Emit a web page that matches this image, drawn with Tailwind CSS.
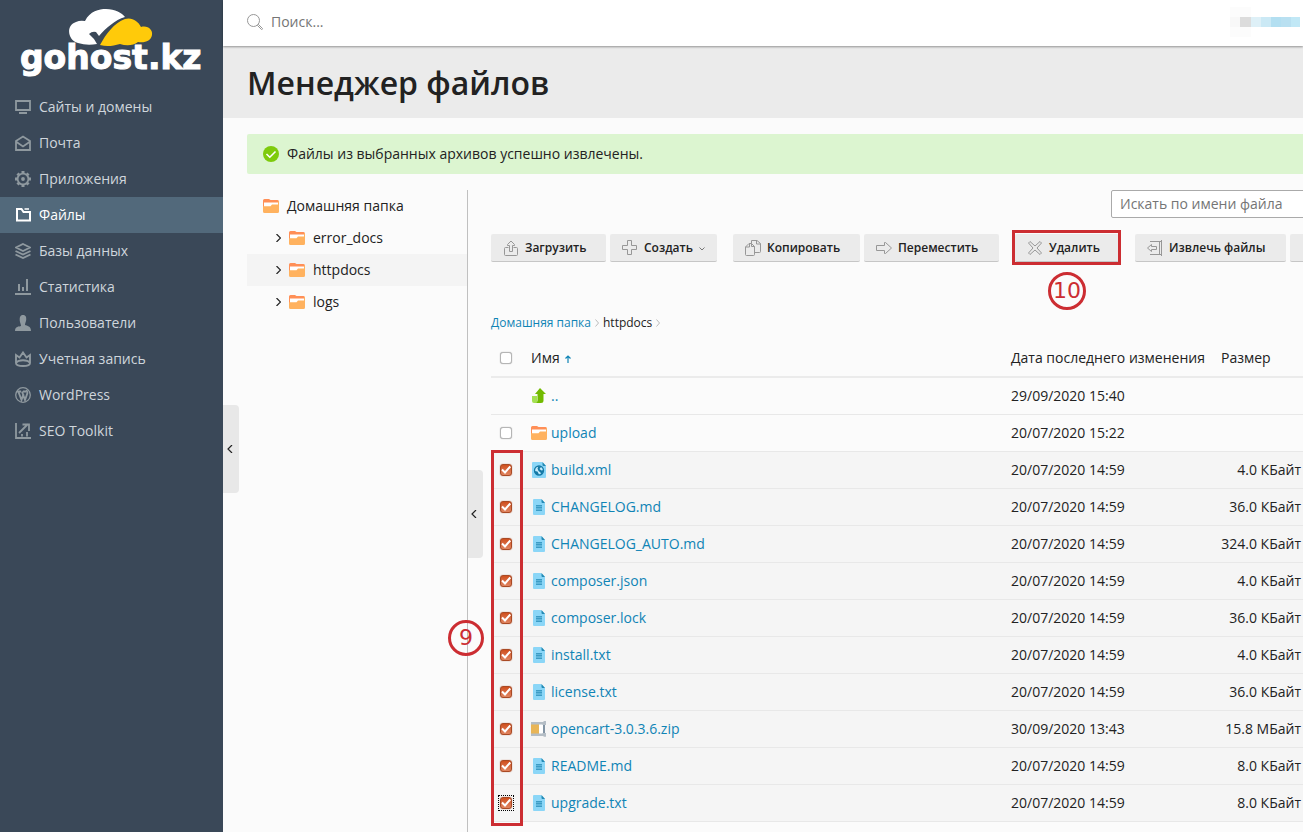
<!DOCTYPE html>
<html lang="ru">
<head>
<meta charset="utf-8">
<title>Менеджер файлов</title>
<script src="https://cdn.jsdelivr.net/npm/@tailwindcss/browser@4"></script>
</head>
<body class="h-screen overflow-hidden bg-[#fbfbfb] font-['Open_Sans','Noto_Sans',sans-serif] text-sm text-[#222]">
<svg class="hidden" aria-hidden="true">
  <symbol id="folder" viewBox="0 0 16 16"><path d="M0 2.500Q0 1 1.500 1H6l1.500 1h7Q16 2 16 3.500V9H0z" fill="#ff8f57"/><path d="M1 4.500h14V9H1z" fill="#fff"/><path d="M0 8.300h7.500L9 6.500h6V3h1v10.500q0 1.500-1.500 1.500h-13Q0 15 0 13.500z" fill="#ffb25f"/></symbol>
  <symbol id="doc" viewBox="0 0 16 16"><path d="M3 0h7l4 4v11q0 1-1 1H3q-1 0-1-1V1q0-1 1-1z" fill="#8bd6f7"/><path d="M10.500 0 14 4h-2.500q-1 0-1-1z" fill="#2389b3"/><path d="M5 6h6v6H5z" fill="#5fb5da"/><path d="M5 6.500h6M5 8.500h6M5 11.500h6" stroke="#3c9cc5"/></symbol>
  <symbol id="xml" viewBox="0 0 16 16"><path d="M2 0h9l4 4v11q0 1-1 1H2q-1 0-1-1V1q0-1 1-1z" fill="#8bd6f7"/><path d="M11.500 0 15 4h-2.500q-1 0-1-1z" fill="#2389b3"/><circle cx="8" cy="8.500" r="4.500" fill="#c5ecfc" stroke="#1479a6" stroke-width="1.300"/><path d="M3.500 9l3 .500 1.500 3-1 .500q-3.500-1-3.500-4zM7.500 4l2.500 1-1.500 2 2 1.500 2-.500q0 3-2.500 4.500l-.500-2-2-1.500-1-2.500z" fill="#1479a6"/></symbol>
  <symbol id="zip" viewBox="0 0 16 16"><path d="M0 3h8v10H0z" fill="#e8b557"/><path d="M8 3h4v10H8z" fill="#fff"/><path d="M12 3h2v10h-2z" fill="#8294a4"/><path d="M0 1h12l1-1h2v4h-3l-1-.500H0zM0 15h12l1 .800h2V12h-3l-1 .500H0z" fill="#b4bdc5"/></symbol>
  <symbol id="up" viewBox="0 0 16 16"><path d="M1 8h5v4l2 3H3q-2 0-2-2z" fill="#a4e052"/><path d="M9 0 15 6h-2.500v6.500q0 2.500-2.500 2.500H4.500Q7 14.500 6.500 12V6H4z" fill="#72ba00"/></symbol>
</svg>

<div class="flex h-full">
  <aside class="relative w-[223px] shrink-0 bg-[#3a4858]">
    <a href="#" class="relative block h-[89px]" aria-label="gohost.kz">
      <svg class="absolute left-[68px] top-2 h-10 w-[86px]" viewBox="68 8 86 40">
        <path d="M78 43C67 40 66 25 76 22Q80 20 85 21C90 11 99 9 106 9c9 0 16 4 19 8C115 20 106 28 99 36L96 32Q92 31 89 34 94 38 97 44 87 46 78 43Z" fill="#fff"/>
        <path d="M100 45C106 34 114 23 125 19c7-2 13 2 16 8 7-2 12 3 11 8-1 6-7 8-14 7-5 4-12 4-18 2-7 2-13 3-20 1Z" fill="#ffca0a"/>
      </svg>
      <span class="absolute left-5 top-[38px] font-['DejaVu_Sans'] text-[33px] leading-10 font-bold text-white [-webkit-text-stroke:1px_white]">gohost.kz</span>
    </a>
    <nav id="nav" class="text-[#cfd6dc]"></nav>
  </aside>

  <div class="relative flex min-w-0 flex-1 flex-col">
    <button aria-label="Свернуть меню" class="absolute left-0 top-[405px] flex h-[88px] w-4 items-center justify-center rounded-r bg-[#e8e8e8]"><svg class="mr-0.5 size-2" viewBox="0 0 8 8" fill="none" stroke="#222" stroke-width="1.200"><path d="M6 0 2 4l4 4"/></svg></button>

    <header class="relative z-10 flex h-[46px] shrink-0 items-center bg-white pb-0.5 pl-6 shadow-[0_1px_2px_#00000060]">
      <label class="flex items-center gap-2"><svg class="size-4" viewBox="0 0 16 16" fill="none" stroke="#979797"><circle cx="6.500" cy="6.500" r="6"/><path d="m10.500 11.500 1-1 4 4q0 1-1 1z"/></svg>
      <input aria-label="Поиск" placeholder="Поиск..." class="w-60 outline-none placeholder:text-[#757575]"></label>
      <div class="absolute right-[3px] top-[7px] flex h-[30px] items-center" aria-hidden="true">
        <i class="flex h-full w-[21px] items-center bg-[#fcfcfc]"><i class="size-2.5 bg-[#f8f8f8]"></i><i class="h-2.5 w-[11px] bg-[#dcdcdc]"></i></i><i class="size-2.5 bg-[#def0f7]"></i><i class="size-2.5 bg-[#cbe9f5]"></i><i class="size-2.5 bg-[#b3dff1]"></i><i class="size-2.5 bg-[#b9e0f1]"></i><i class="h-2.5 w-[9px] bg-[#c1e8f6]"></i>
      </div>
    </header>
    <div class="flex h-[72px] shrink-0 items-center bg-[#ebebeb] pt-0.5 pl-6"><h1 class="text-[32px] leading-10 font-semibold">Менеджер файлов</h1></div>

    <div class="ml-6 mt-4 flex h-10 shrink-0 items-center gap-2 rounded-l-xs bg-[#dcf5d0] pl-4"><svg class="size-4" viewBox="0 0 16 16"><circle cx="8" cy="8" r="8" fill="#7ecb0c"/><path d="m3.500 8 3.300 3.200L12.500 5.500" fill="none" stroke="#fff" stroke-width="1.600"/></svg><p>Файлы из выбранных архивов успешно извлечены.</p></div>

    <div class="ml-6 mt-4 flex min-h-0 flex-1">
      <div class="w-[221px] shrink-0 border-r border-[#c0c0c0]">
        <a href="#" class="flex h-8 items-center gap-2 pl-4"><svg class="size-4"><use href="#folder"/></svg>Домашняя папка</a>
        <div id="tree"></div>
      </div>
      <main class="relative min-w-0 flex-1 pl-[23px]">
        <button aria-label="Свернуть дерево" class="absolute left-0 top-[280px] flex h-[88px] w-[15px] items-center justify-center rounded-r bg-[#e8e8e8]"><svg class="mr-1 size-2" viewBox="0 0 8 8" fill="none" stroke="#222" stroke-width="1.200"><path d="M6 0 2 4l4 4"/></svg></button>
        <div class="flex justify-end"><input aria-label="Искать по имени файла" placeholder="Искать по имени файла" class="-mr-2 h-7 w-[200px] rounded-xs border border-[#aaa] bg-white px-2 pb-0.5 placeholder:text-[#757575]"></div>
        <div class="mt-4 flex h-7 gap-4 text-xs font-semibold">
          <div class="flex gap-1">
            <button class="flex w-[115px] shrink-0 items-center gap-1.5 rounded-xs border-b border-[#c6c6c6] bg-[#ebebeb] pl-3"><svg class="size-4" viewBox="0 0 16 16" fill="none" stroke="#979797"><path d="M5.500 7.500h-3q-1 0-1 1v6q0 1 1 1h11q1 0 1-1v-6q0-1-1-1h-3M6.500 11.500V5.500h-2v-1L8 1l3.500 3.500v1h-2v6z"/></svg>Загрузить</button>
            <button class="flex w-[107px] shrink-0 items-center gap-1.5 rounded-xs border-b border-[#c6c6c6] bg-[#ebebeb] pl-3"><svg class="size-4" viewBox="0 0 16 16" fill="none" stroke="#979797"><path d="M5.500.500h4v5h5v4h-5v5h-4v-5h-5v-4h5z"/></svg>Создать<svg class="mt-0.5 h-1 w-1.5" viewBox="0 0 6 4" fill="none" stroke="#777"><path d="m.500.500 2.500 2.500L5.500.500"/></svg></button>
          </div>
          <div class="flex gap-1">
            <button class="flex w-[127px] shrink-0 items-center gap-1.5 rounded-xs border-b border-[#c6c6c6] bg-[#ebebeb] pl-3"><svg class="size-4" viewBox="0 0 16 16" fill="none" stroke="#979797"><path d="M6.500 3.500H4L.500 7v7.500q0 1 1 1h7q1 0 1-1v-8l-3-3zM4.500 3.500V7h-4M6.500 3.500v-3h5.500l3.500 3v8q0 1-1 1h-5M11.500.500V4h4M6.500 3.500v3h3"/></svg>Копировать</button>
            <button class="flex w-[135px] shrink-0 items-center gap-1.5 rounded-xs border-b border-[#c6c6c6] bg-[#ebebeb] pl-3"><svg class="size-4" viewBox="0 0 16 16" fill="none" stroke="#979797"><path d="M.500 5.500h8V2.500h1L15.500 8l-6 5.500h-1v-3h-8z"/></svg>Переместить</button>
          </div>
          <button class="relative flex w-[104px] shrink-0 items-center gap-1.5 rounded-xs border-b border-[#c6c6c6] bg-[#ebebeb] pl-3"><svg class="size-4" viewBox="0 0 16 16" fill="none" stroke="#979797"><path d="M3 1.500 8 6l5-4.500L14.500 3 10 8l4.500 5-1.500 1.500L8 10l-5 4.500L1.500 13 6 8 1.500 3z" stroke-linejoin="round"/></svg>Удалить
            <span class="absolute -left-[3px] -top-1 h-[35px] w-[109px] border-3 border-[#cc2d32]"></span>
            <span class="absolute left-[33px] top-[38px] flex size-[38px] items-center justify-center rounded-full border-3 border-[#cc2d32] font-['DejaVu_Sans'] text-[22px] font-normal text-[#cc2d32]">10</span></button>
          <div class="flex gap-1">
            <button class="flex w-[151px] shrink-0 items-center gap-1.5 rounded-xs border-b border-[#c6c6c6] bg-[#ebebeb] pl-3"><svg class="size-4" viewBox="0 0 16 16" fill="none" stroke="#979797"><path d="M3 1.500h12M3 14.500h12M12.500 1v14M14.500 0v16M4.500 4.500.500 8l4 3.500V9.500h5v-3h-5z"/></svg>Извлечь файлы</button>
            <button aria-label="Ещё" class="w-10 shrink-0 rounded-xs border-b border-[#c6c6c6] bg-[#ebebeb]"></button>
          </div>
        </div>
        <nav class="mt-[51px] flex h-5 items-center gap-1 text-xs" aria-label="Путь"><a href="#" class="text-[#1084b5]">Домашняя папка</a><svg class="h-2 w-1" viewBox="0 0 4 8" fill="none" stroke="#bbb"><path d="m.500.500 3 3.500-3 3.500"/></svg><span>httpdocs</span><svg class="h-2 w-1" viewBox="0 0 4 8" fill="none" stroke="#bbb"><path d="m.500.500 3 3.500-3 3.500"/></svg></nav>
        <div class="relative mt-[7px]">
          <table class="w-full table-fixed border-collapse">
            <colgroup><col class="w-8"><col><col class="w-[210px]"><col class="w-[90px]"></colgroup>
            <thead><tr class="h-[37px] border-b-2 border-[#ebebeb]">
              <th class="pl-[9px]"><input type="checkbox" aria-label="Выбрать все" class="block size-3 appearance-none rounded-[3px] border border-[#b5b5b5] bg-white shadow-[0_0_1px_#999]"></th>
              <th class="pl-2 text-left font-normal">Имя <svg class="ml-0.5 inline h-2 w-1.5" viewBox="0 0 6 8" fill="none" stroke="#1084b5" stroke-width="1.200"><path d="M3 8V1M.500 3.500 3 1l2.500 2.500"/></svg></th>
              <th class="pl-2 text-left font-normal whitespace-nowrap">Дата последнего изменения</th><th class="pl-2 text-left font-normal">Размер</th></tr></thead>
            <tbody id="rows"></tbody>
          </table>
          <span class="absolute left-0 top-[110px] h-[376px] w-8 border-3 border-[#cc2d32]"></span>
          <span class="absolute -left-[43px] top-[280px] flex size-9 items-center justify-center rounded-full border-3 border-[#cc2d32] font-['DejaVu_Sans'] text-[22px] text-[#cc2d32]">9</span>
        </div>
      </main>
    </div>
  </div>
</div>
<script>
const navItems = [
  ['Сайты и домены', '<path d="M1 2h14v9H1z" stroke-width="1.800"/><path d="M4 14h8" stroke-width="2"/>'],
  ['Почта', '<path d="M1 6 8 1.500 15 6v9H1zM1.500 7 8 11.500 14.500 7" stroke-width="1.800"/>'],
  ['Приложения', '<circle cx="8" cy="8" r="5.400" stroke-width="1.800"/><path d="M8 0v2.500M8 13.500V16M0 8h2.500M13.500 8H16M2.500 2.500 4 4M12 12l1.500 1.500M13.500 2.500 12 4M4 12l-1.500 1.500" stroke-width="3"/><circle cx="8" cy="8" r="1.900" fill="currentColor" stroke="none"/>'],
  ['Файлы', '<path d="M2 2h4.500l2 3H15v8.500H2z" stroke-width="2"/><path d="M9.500 2H14" stroke-width="1.500"/>'],
  ['Базы данных', '<path d="M8 1 15 4.500 8 8 1 4.500zM.500 8 8 11.500 15.500 8M.500 11.500 8 15l7.500-3.500" stroke-width="1.900"/>'],
  ['Статистика', '<path d="M0 15h16" stroke-width="2"/><path d="M4 12V5M8 12V8M12 12V0" stroke-width="2"/>'],
  ['Пользователи', '<path d="M8 0c3 0 3.500 2.500 3.200 5-.2 2-1.200 3-1.200 5 2 .800 6 1 6 6H0c0-5 4-4.200 6-5 0-2-1-3-1.200-5C4.500 2.500 5 0 8 0z" fill="currentColor" stroke="none"/>'],
  ['Учетная запись', '<path d="M1 12V4l3.500 2.500L8 1.500l3.500 5L15 4v8c0 4-14 4-14 0zM1.500 11.500c2-3 11-3 13 0" stroke-width="1.900"/>'],
  ['WordPress', '<circle cx="8" cy="8" r="7.300" stroke-width="1.300"/><path d="M2 4.500h4M8 4.500h3M3.500 5 6.500 13 8.500 7M7 4.500 10 13l2.300-6.500c.500-1.500-.800-2-.500-3.500" stroke-width="1.900"/>'],
  ['SEO Toolkit', '<path d="M1 0v15h15" stroke-width="1.800"/><path d="m4 10 9-9M7.500 1.500H14V8M7 13.500V11M12 13.500V9" stroke-width="1.800"/>']
];
document.getElementById('nav').innerHTML = navItems.map(([t, p], i) =>
  `<a href="#" class="flex h-9 items-center gap-2 pl-[15px] ${i === 3 ? 'bg-[#52697b] text-white' : ''}"><svg class="size-4 ${i === 3 ? 'text-white' : 'text-[#8f999f]'}" viewBox="0 0 16 16" fill="none" stroke="currentColor">${p}</svg>${t}</a>`).join('');

document.getElementById('tree').innerHTML = ['error_docs', 'httpdocs', 'logs'].map(t =>
  `<a href="#" class="flex h-8 items-center gap-2 pl-7 ${t === 'httpdocs' ? 'bg-[#f4f4f4]' : ''}"><svg class="h-2 w-1.5" viewBox="0 0 6 8" fill="none" stroke="#222" stroke-width="1.200"><path d="m1.500 0 4 4-4 4"/></svg><svg class="size-4"><use href="#folder"/></svg>${t}</a>`).join('');

const d = '20/07/2020 14:59';
const files = [
  ['..', 'up', '29/09/2020 15:40', ''], ['upload', 'folder', '20/07/2020 15:22', ''],
  ['build.xml', 'xml', d, '4.0 КБайт'], ['CHANGELOG.md', 'doc', d, '36.0 КБайт'],
  ['CHANGELOG_AUTO.md', 'doc', d, '324.0 КБайт'], ['composer.json', 'doc', d, '4.0 КБайт'],
  ['composer.lock', 'doc', d, '36.0 КБайт'], ['install.txt', 'doc', d, '4.0 КБайт'],
  ['license.txt', 'doc', d, '36.0 КБайт'], ['opencart-3.0.3.6.zip', 'zip', '30/09/2020 13:43', '15.8 МБайт'],
  ['README.md', 'doc', d, '8.0 КБайт'], ['upgrade.txt', 'doc', d, '8.0 КБайт']
];
document.getElementById('rows').innerHTML = files.map(([n, icon, date, size], i) => {
  const box = i === 0 ? '' : i === 1
    ? `<input type="checkbox" aria-label="${n}" class="block size-3 appearance-none rounded-[3px] border border-[#b5b5b5] bg-white shadow-[0_0_1px_#999]">`
    : `<label class="relative block size-3 ${i === 11 ? 'outline-1 outline-offset-1 outline-dotted outline-black' : ''}"><input type="checkbox" checked aria-label="${n}" class="block size-3 appearance-none rounded-[3px] border border-[#a94a25] bg-linear-to-b from-[#cf4f1c] to-[#e08560] shadow-[0_0_1px_#a94a25]"><svg class="pointer-events-none absolute inset-0 size-3" viewBox="0 0 12 12" fill="none" stroke="#fff" stroke-width="2"><path d="m2 5.500 3 3L10.300 2.500"/></svg></label>`;
  return `<tr class="h-[37px] border-b border-[#e8e8e8] ${i > 1 ? 'bg-[#f5f5f5]' : ''}"><td class="pl-[9px]">${box}</td><td class="pl-2"><a href="#" class="flex items-center gap-1 text-[#1084b5]"><svg class="size-4"><use href="#${icon}"/></svg>${n}</a></td><td class="pl-2">${date}</td><td class="pr-0.5 text-right whitespace-nowrap">${size}</td></tr>`;
}).join('');
</script>
</body>
</html>
